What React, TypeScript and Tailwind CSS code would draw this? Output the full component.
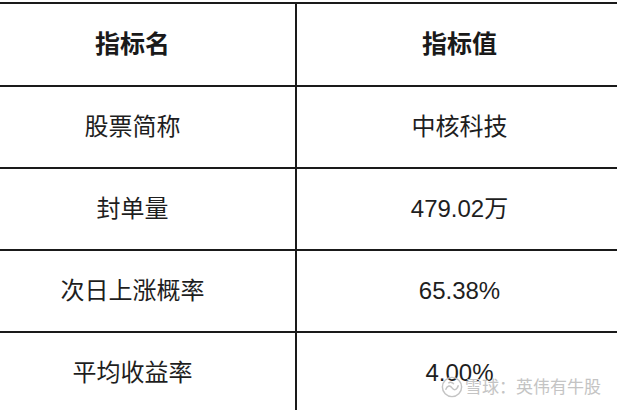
import React from "react";

const rows: [string, string][] = [
  ["股票简称", "中核科技"],
  ["封单量", "479.02万"],
  ["次日上涨概率", "65.38%"],
  ["平均收益率", "4.00%"],
];

export default function App() {
  return (
    <div
      className="relative w-[617px] h-[410px] overflow-hidden bg-white text-[#1e1e1e]"
      style={{ fontFamily: '"Liberation Sans", "Noto Sans CJK SC", sans-serif' }}
    >
      <div className="mt-[2px] border-t-2 border-[#1a1a1a]">
        <div className="grid grid-cols-[295px_1fr] h-[83px] border-b-2 border-[#1a1a1a]">
          <div className="flex items-center justify-center pr-[30px] text-[25px] font-bold text-[#1a1a1a]">
            指标名
          </div>
          <div className="flex items-center justify-center pl-[5px] border-l-2 border-[#1a1a1a] text-[25px] font-bold text-[#1a1a1a]">
            指标值
          </div>
        </div>
        {rows.map(([k, v]) => (
          <div
            key={k}
            className="grid grid-cols-[295px_1fr] h-[82px] border-b-2 border-[#1a1a1a]"
          >
            <div className="flex items-center justify-center pr-[30px] text-[24px]">
              {k}
            </div>
            <div className="flex items-center justify-center pl-[5px] border-l-2 border-[#1a1a1a] text-[24px]">
              {v}
            </div>
          </div>
        ))}
      </div>
      <div className="absolute left-[441px] top-[376px] flex items-center whitespace-nowrap text-[17px] leading-none text-[#c4c4c4]">
        <svg width="22" height="22" viewBox="0 0 24 24" fill="none" stroke="#c4c4c4" strokeWidth="1.6">
          <circle cx="12" cy="12" r="10.5" />
          <path d="M5 15 C7 10, 10 10, 12 13 C14 16, 17 16, 19 10" />
          <path d="M8 8 C10 6, 13 7, 14 9" />
        </svg>
        <span className="ml-[2px]">雪球：英伟有牛股</span>
      </div>
    </div>
  );
}
